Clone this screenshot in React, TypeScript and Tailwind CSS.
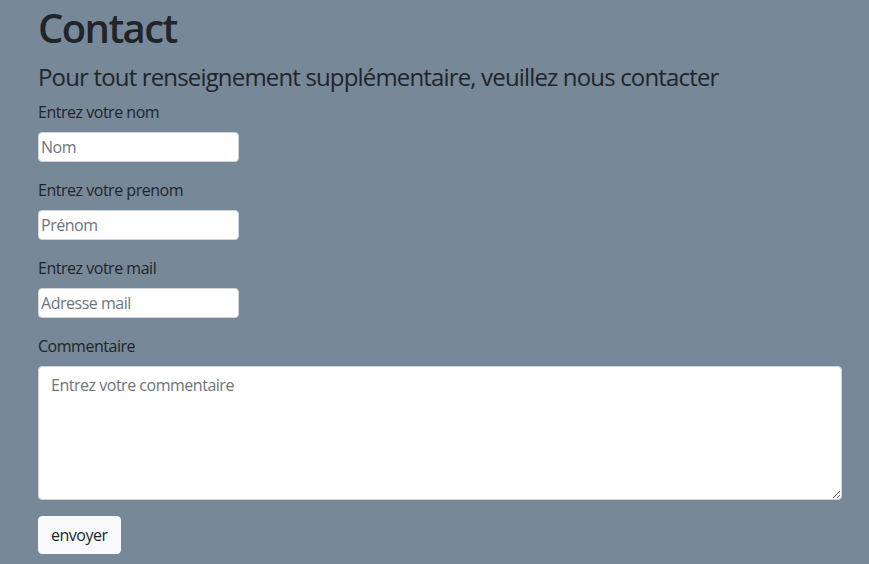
export default function App() {
  const font = { fontFamily: '"Open Sans", "Noto Sans", sans-serif' };
  const inputCls =
    "w-[201px] h-[30px] mb-4 bg-white border border-[#ced4da] rounded-[4px] px-[2px] text-[16px] tracking-[-0.03em] placeholder:text-[#6c757d]";
  return (
    <div
      className="min-h-[564px] bg-[#778899] px-[38px] text-[#212529] tracking-[-0.03em]"
      style={font}
    >
      <h1 className="pt-[4px] text-[40px] leading-[48px] font-semibold tracking-[-0.04em]">Contact</h1>
      <h4 className="text-[24px] leading-[29px] mt-[10px] mb-[9px] tracking-[-0.035em]">
        Pour tout renseignement supplémentaire, veuillez nous contacter
      </h4>
      <form className="flex flex-col">
        <label className="text-[16px] leading-[24px] mb-2">Entrez votre nom</label>
        <input type="text" placeholder="Nom" className={inputCls} />
        <label className="text-[16px] leading-[24px] mb-2">Entrez votre prenom</label>
        <input type="text" placeholder="Prénom" className={inputCls} />
        <label className="text-[16px] leading-[24px] mb-2">Entrez votre mail</label>
        <input type="email" placeholder="Adresse mail" className={inputCls} />
        <label className="text-[16px] leading-[24px] mb-2">Commentaire</label>
        <textarea
          placeholder="Entrez votre commentaire"
          className="w-[804px] h-[134px] mb-4 bg-white border border-[#ced4da] rounded-[4px] px-3 py-[6px] text-[16px] leading-[24px] tracking-[-0.03em] placeholder:text-[#6c757d]"
        />
        <div>
          <button
            type="button"
            className="h-[38px] px-3 bg-[#f8f9fa] border border-[#f8f9fa] rounded-[4px] text-[16px] tracking-[-0.03em] text-[#212529]"
          >
            envoyer
          </button>
        </div>
      </form>
    </div>
  );
}
